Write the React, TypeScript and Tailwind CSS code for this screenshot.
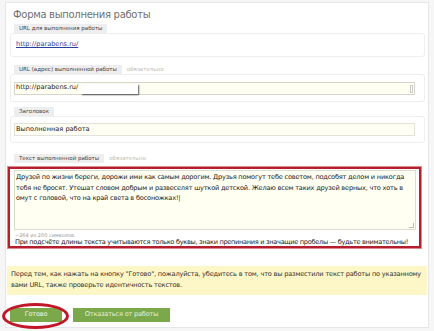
import React from "react";

const font = { fontFamily: '"DejaVu Sans", Verdana, sans-serif' };

function Label({ text, req }: { text: string; req?: boolean }) {
  return (
    <div className="flex items-end ml-[8px] h-[9px]">
      <div className="bg-[#eeeeee] px-[5px] h-[9px] leading-[9px] text-[5.5px] text-[#444]">{text}</div>
      {req && <div className="ml-[5px] text-[5.5px] leading-[9px] text-[#bbbbbb]">обязательно</div>}
    </div>
  );
}

export default function App() {
  return (
    <div className="w-[434px] h-[331px] bg-[#f6f6f6] overflow-hidden" style={font}>
      <div className="ml-[5px] mt-[2px] w-[424px] h-[326px] bg-white border border-[#e6e6e6] flex flex-col">
        <div className="pl-[7px] pt-[5px] h-[21px] text-[10px] leading-[13px] text-[#707070] tracking-[-0.3px]">Форма выполнения работы</div>

        <Label text="URL для выполнения работы" />
        <div className="ml-[4px] w-[415px] h-[24px] border border-[#eeeeee] rounded-[3px] flex items-center pl-[5px]">
          <span className="text-[6.6px] text-[#2a3f9a] underline">http://parabens.ru/</span>
        </div>

        <div className="h-[8px] shrink-0" />
        <Label text="URL (адрес) выполненной работы" req />
        <div className="ml-[4px] w-[415px] h-[28px] border border-[#eeeeee] rounded-[3px] flex items-center pl-[3px]">
          <div className="w-[401px] h-[13px] bg-[#fffff2] border border-[#d6d6cc] flex items-center pl-[1px] relative">
            <span className="text-[6.6px] text-[#222]">http://parabens.ru/</span>
            <div className="absolute left-[66px] top-[1px] w-[57px] h-[10px] bg-white shadow-[1px_1px_1.5px_rgba(0,0,0,0.65)]" />
            <div className="absolute right-[1px] top-[2px] w-[3px] h-[8px] border border-[#ccc]" />
          </div>
        </div>

        <div className="h-[5px] shrink-0" />
        <Label text="Заголовок" />
        <div className="ml-[4px] w-[415px] h-[27px] border border-[#eeeeee] rounded-[3px] flex items-center pl-[3px]">
          <div className="w-[401px] h-[13px] bg-[#fffff4] border border-[#e2e2da] flex items-center pl-[1px]">
            <span className="text-[6.6px] text-[#222]">Выполненная работа</span>
          </div>
        </div>

        <div className="h-[11px] shrink-0" />
        <Label text="Текст выполненной работы" req />
        <div className="ml-[2px] w-[413px] mt-[4px] border-2 border-[#b51f2d] shadow-[0_0_0_1px_#dc8a90] px-[4px] pt-[1px]">
          <div className="w-[402px] h-[60px] bg-[#fffff2] border border-[#dcdcd0] px-[1px] pt-[1px] text-[6.6px] tracking-[-0.2px] leading-[10.5px] text-[#222] relative">
            Друзей по жизни береги, дорожи ими как самым дорогим. Друзья помогут тебе советом, подсобят делом и никогда тебя не бросят. Утешат словом добрым и развеселят шуткой детской. Желаю всем таких друзей верных, что хоть в омут с головой, что на край света в босоножках!|
            <div className="absolute right-[1px] bottom-[1px] w-[5px] h-[5px] border-r border-b border-[#bbb]" />
          </div>
          <div className="mt-[2px] text-[5px] leading-[6px] text-[#999] pl-[1px]">~264 из 200 символов.</div>
          <div className="text-[6.6px] tracking-[-0.3px] leading-[8px] text-[#222] pl-[1px] whitespace-nowrap">При подсчёте длины текста учитываются только буквы, знаки препинания и значащие пробелы — будьте внимательны!</div>
        </div>

        <div className="h-[18px] shrink-0" />
        <div className="ml-[1px] w-[420px] h-[29px] bg-[#fdf6c6] px-[4px] pt-[3px] text-[6.6px] tracking-[-0.18px] leading-[11px] text-[#333]">
          Перед тем, как нажать на кнопку "Готово", пожалуйста, убедитесь в том, что вы разместили текст работы по указанному вами URL, также проверьте идентичность текстов.
        </div>

        <div className="mt-[13px] ml-[4px] flex items-center gap-[11px] relative">
          <div className="w-[52px] h-[14px] bg-[#7aa84b] text-[#f2f7ea] text-[6.6px] tracking-[-0.2px] flex items-center justify-center">Готово</div>
          <div className="w-[97px] h-[14px] bg-[#7aa84b] text-[#e6f0d8] text-[6.6px] tracking-[-0.2px] flex items-center justify-center">Отказаться от работы</div>
          <div className="absolute left-[-8px] top-[-5px] w-[67px] h-[26px] rounded-[50%] border-[3px] border-[#c01828]" />
        </div>
      </div>
    </div>
  );
}
